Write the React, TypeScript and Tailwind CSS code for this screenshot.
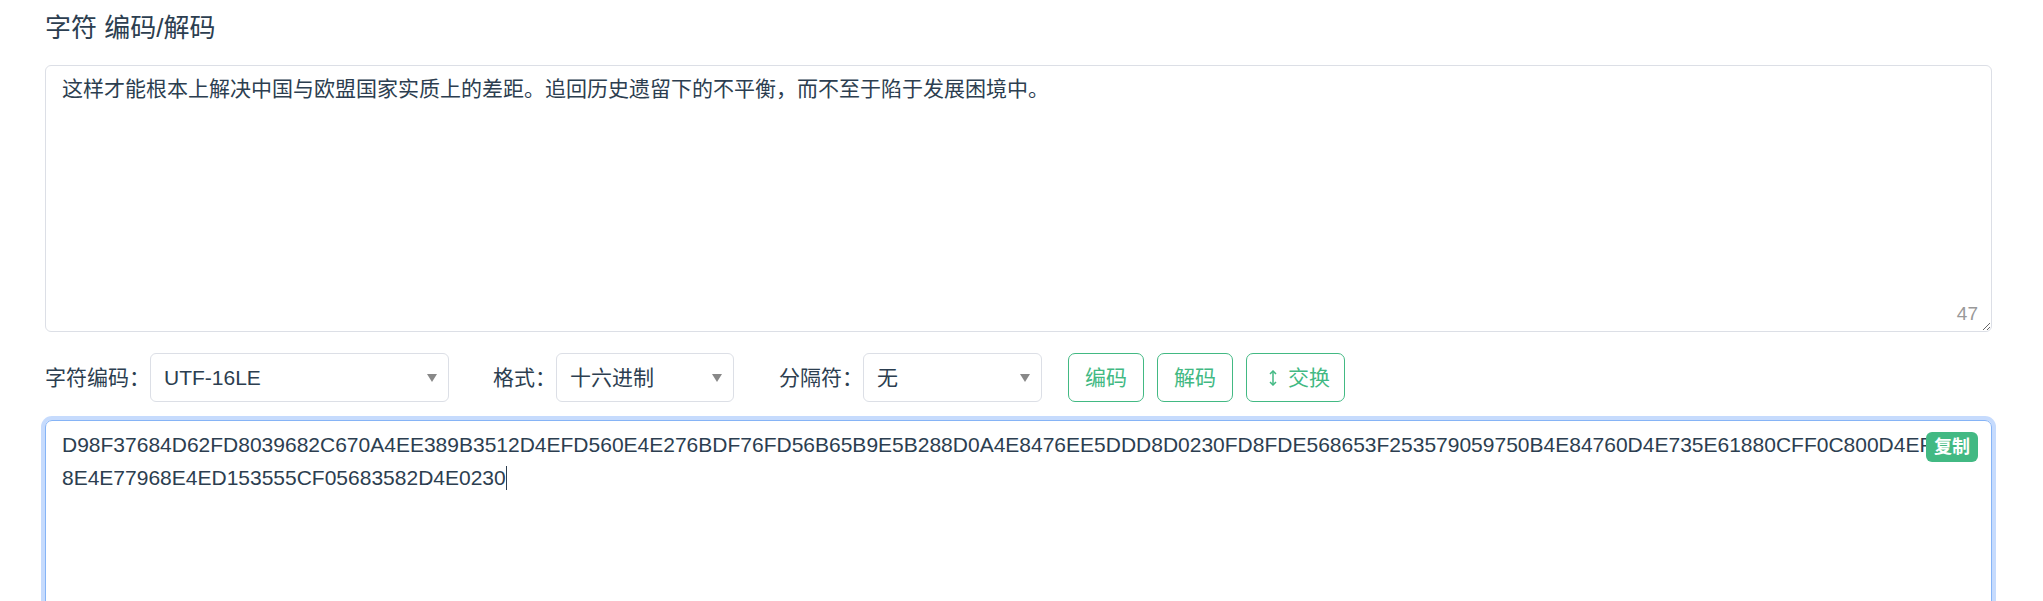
import React from "react";

const FONT = '"Liberation Sans", "Noto Sans CJK SC", sans-serif';

const SOURCE =
  "这样才能根本上解决中国与欧盟国家实质上的差距。追回历史遗留下的不平衡，而不至于陷于发展困境中。";

const HEX_LINE_1 =
  "D98F37684D62FD8039682C670A4EE389B3512D4EFD560E4E276BDF76FD56B65B9E5B288D0A4E8476EE5DDD8D0230FD8FDE568653F253579059750B4E84760D4E735E61880CFF0C800D4EF381";
const HEX_LINE_2 = "8E4E77968E4ED153555CF05683582D4E0230";

function FakeSelect({ value, width }: { value: string; width: string }) {
  return (
    <div
      className={`${width} h-[49px] flex items-center justify-between pl-[13px] pr-[11px] border border-[#dcdfe6] rounded-[6px] bg-white`}
    >
      <span className="text-[21px] text-[#2c3e50]">{value}</span>
      <svg width="10" height="8" viewBox="0 0 10 8">
        <path d="M0 0 H10 L5 8 Z" fill="#888" />
      </svg>
    </div>
  );
}

function OutlineButton({ children, className }: { children: React.ReactNode; className?: string }) {
  return (
    <button
      className={`h-[49px] flex items-center border border-[#42b983] rounded-[7px] text-[21px] text-[#42b983] bg-white ${className ?? "px-[16px]"}`}
    >
      {children}
    </button>
  );
}

export default function App() {
  return (
    <div className="min-h-screen bg-white pl-[45px] pr-[51px] pt-[10px]" style={{ fontFamily: FONT }}>
      <h2 className="text-[26px] leading-[36px] font-normal text-[#2c3e50]">字符 编码/解码</h2>

      {/* input */}
      <div className="relative mt-[19px] h-[267px]">
        <textarea
          defaultValue={SOURCE}
          className="block w-full h-full border border-[#dcdfe6] rounded-[6px] px-[16px] pt-[6px] text-[21px] leading-[33px] text-[#2c3e50] outline-none resize-y"
          style={{ fontFamily: FONT }}
        />
        <span className="absolute right-[14px] bottom-[8px] text-[19px] leading-[20px] text-[#999]">47</span>
      </div>

      {/* options */}
      <div className="mt-[21px] flex items-center h-[49px] text-[21px] text-[#2c3e50]">
        <span>字符编码：</span>
        <FakeSelect value="UTF-16LE" width="w-[299px]" />
        <span className="ml-[44px]">格式：</span>
        <FakeSelect value="十六进制" width="w-[178px]" />
        <span className="ml-[45px]">分隔符：</span>
        <FakeSelect value="无" width="w-[179px]" />
        <div className="ml-[26px] flex gap-[13px]">
          <OutlineButton>编码</OutlineButton>
          <OutlineButton>解码</OutlineButton>
          <OutlineButton className="pl-[22px] pr-[14px] gap-[11px]">
            <svg width="8" height="16" viewBox="0 0 8 16" fill="none" stroke="#42b983" strokeWidth="1.5">
              <path d="M4 1 V15" />
              <path d="M1 4 L4 1 L7 4" />
              <path d="M1 12 L4 15 L7 12" />
            </svg>
            交换
          </OutlineButton>
        </div>
      </div>

      {/* output */}
      <div className="relative mt-[18px] h-[260px] border border-[#86b4f6] rounded-[7px] shadow-[0_0_0_4px_#c6dbfd] px-[16px] pt-[7px] text-[21px] leading-[33px] text-[#2c3e50] overflow-hidden">
        <div className="whitespace-nowrap overflow-hidden">{HEX_LINE_1}</div>
        <div className="whitespace-nowrap">
          {HEX_LINE_2}
          <span className="inline-block w-px h-[24px] bg-[#2c3e50] align-middle -mt-[2px]" />
        </div>
        <span className="absolute top-[11px] right-[13px] h-[30px] px-[8px] flex items-center rounded-[6px] bg-[#42b983] text-white text-[18px] font-bold">
          复制
        </span>
      </div>
    </div>
  );
}
